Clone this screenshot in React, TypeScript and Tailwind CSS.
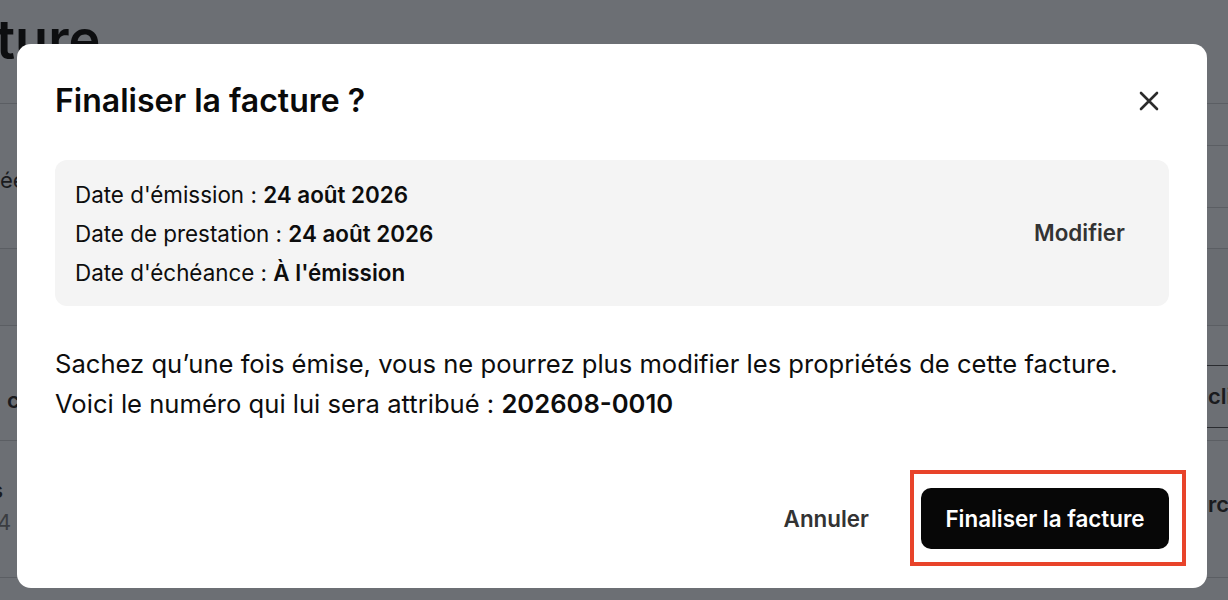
import React from 'react';

export default function App() {
    return (
        <div className="relative h-[600px] w-[1228px] overflow-hidden bg-[#6c6f74] font-['Inter',sans-serif]">
            {/* page behind the backdrop */}
            <div className="flex flex-col">
                <div className="h-[103px] pt-[10px]">
                    <div className="-ml-[4px] text-[54px] font-semibold leading-[60px] text-[#0d0e10]">ture</div>
                </div>
                <div className="grid h-[145px] grid-cols-2 border-t border-[#5b5e63]">
                    <div className="pt-[63px] text-[22px] leading-[26px] text-[#1a1b1e]">éée</div>
                    <div className="flex flex-col">
                        <div className="h-[42px] border-b border-[#5b5e63]"></div>
                        <div className="h-[62px] border-b border-[#5b5e63]"></div>
                    </div>
                </div>
                <div className="h-[77px] border-t border-[#5b5e63] bg-[#696c71]"></div>
                <div className="grid h-[115px] grid-cols-2 border-t border-[#5b5e63]">
                    <div className="pl-[7px] pt-[61px] text-[22px] font-semibold leading-[26px] text-[#1a1b1e]">c</div>
                    <div className="flex flex-col pt-[39px]">
                        <div className="flex h-[63px] items-center justify-end border-y border-[#2a2c30]">
                            <span className="-mr-[2px] w-[22px] overflow-hidden text-[22px] font-semibold text-[#1a1b1e]">cli</span>
                        </div>
                    </div>
                </div>
                <div className="grid h-[137px] grid-cols-2 border-t border-[#5b5e63]">
                    <div className="pt-[33px] text-[22px] leading-[32px]">
                        <div className="-ml-[9px] font-semibold text-[#1a1b1e]">s</div>
                        <div className="-ml-[3px] text-[#3b3d41]">4</div>
                    </div>
                    <div className="flex justify-end pt-[50px]">
                        <span className="w-[20px] overflow-hidden text-[22px] font-semibold leading-[26px] text-[#1a1b1e]">rc</span>
                    </div>
                </div>
                <div className="border-t border-[#5b5e63]"></div>
            </div>

            {/* modal */}
            <div className="absolute inset-0 pl-[17px] pt-[44px]">
                <div className="flex h-[544px] w-[1190px] flex-col rounded-[14px] bg-white px-[38px] pb-[39px] pt-[39px] text-[#0d0d0d]">
                    <div className="flex h-[36px] items-center justify-between">
                        <h2 className="text-[32px] font-semibold leading-[36px] text-[#0a0a0a]">Finaliser la facture ?</h2>
                        <button className="mr-[10px] text-[#2b2b2b]">
                            <svg width="20" height="20" viewBox="0 0 20 20" fill="none" stroke="currentColor" strokeWidth="2.6" strokeLinecap="round">
                                <path d="M2 2L18 18M18 2L2 18" />
                            </svg>
                        </button>
                    </div>

                    <div className="mt-[41px] flex h-[146px] items-center justify-between rounded-[12px] bg-[#f4f4f4] pl-[20px] pr-[28px]">
                        <div className="text-[22.4px] leading-[39px]">
                            <div>Date d'émission : <span className="font-semibold">24 août 2026</span></div>
                            <div>Date de prestation : <span className="font-semibold">24 août 2026</span></div>
                            <div>Date d'échéance : <span className="font-semibold">À l'émission</span></div>
                        </div>
                        <button className="px-4 py-2 text-[22.4px] font-semibold text-[#333333]">Modifier</button>
                    </div>

                    <p className="mt-[38px] text-[25.6px] leading-[40px]">
                        Sachez qu’une fois émise, vous ne pourrez plus modifier les propriétés de cette facture.
                        <br />
                        Voici le numéro qui lui sera attribué : <span className="font-semibold">202608-0010</span>
                    </p>

                    <div className="mt-auto flex items-center justify-end gap-[28px]">
                        <button className="h-[61px] px-6 text-[22.4px] font-semibold text-[#333333]">Annuler</button>
                        <div className="relative">
                            <button className="h-[61px] w-[248px] rounded-[10px] bg-[#070707] text-[22.4px] font-semibold text-white">Finaliser la facture</button>
                            <div className="pointer-events-none absolute -bottom-[17px] -left-[11px] -right-[17px] -top-[18px] border-[4px] border-[#e8432a]"></div>
                        </div>
                    </div>
                </div>
            </div>
        </div>
    );
}
